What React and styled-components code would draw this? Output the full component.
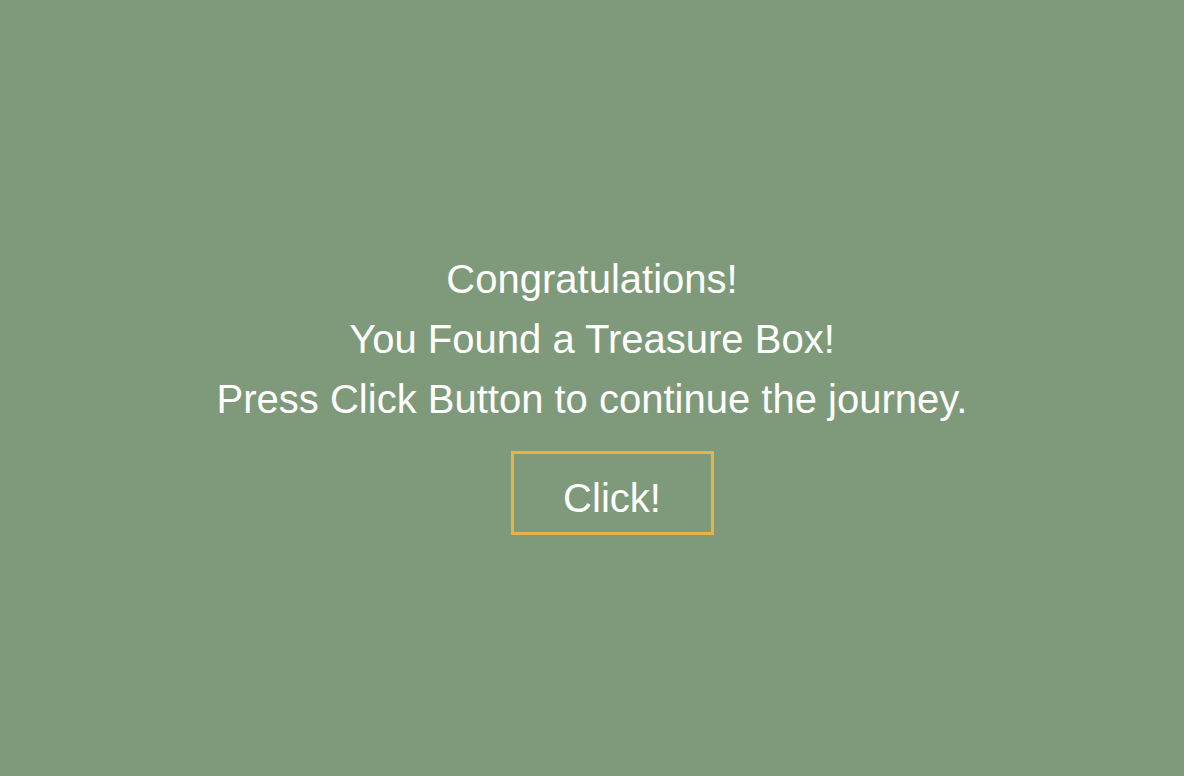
import React from "react";
import styled, { createGlobalStyle } from "styled-components";

const GlobalStyle = createGlobalStyle`
  html, body {
    margin: 0;
    padding: 0;
    background: #7e9a7a;
  }
  body {
    font-family: "Liberation Sans", Arial, Helvetica, sans-serif;
  }
`;

const Screen = styled.div`
  min-height: 100vh;
  display: flex;
  flex-direction: column;
  align-items: center;
  justify-content: center;
  padding-top: 7px;
  box-sizing: border-box;
  background: #7e9a7a;
  color: #ffffff;
`;

const Message = styled.div`
  display: flex;
  flex-direction: column;
  align-items: center;
  .line {
    font-size: 40px;
    line-height: 60px;
    white-space: nowrap;
  }
`;

const ClickButton = styled.button`
  box-sizing: border-box;
  width: 203px;
  height: 84px;
  margin-top: 22px;
  margin-left: 40px;
  padding: 21px 0 11px;
  background: transparent;
  border: 3px solid #e5b348;
  color: #ffffff;
  font-family: "Liberation Sans", Arial, Helvetica, sans-serif;
  font-size: 40px;
  line-height: 46px;
  cursor: pointer;
  &:focus {
    outline: none;
  }
`;

const App = () => {
  const onClick = () => {};

  return (
    <>
      <GlobalStyle />
      <Screen>
        <Message>
          <div className="line">Congratulations!</div>
          <div className="line">You Found a Treasure Box!</div>
          <div className="line">Press Click Button to continue the journey.</div>
        </Message>
        <ClickButton onClick={onClick}>Click!</ClickButton>
      </Screen>
    </>
  );
};

export default App;
